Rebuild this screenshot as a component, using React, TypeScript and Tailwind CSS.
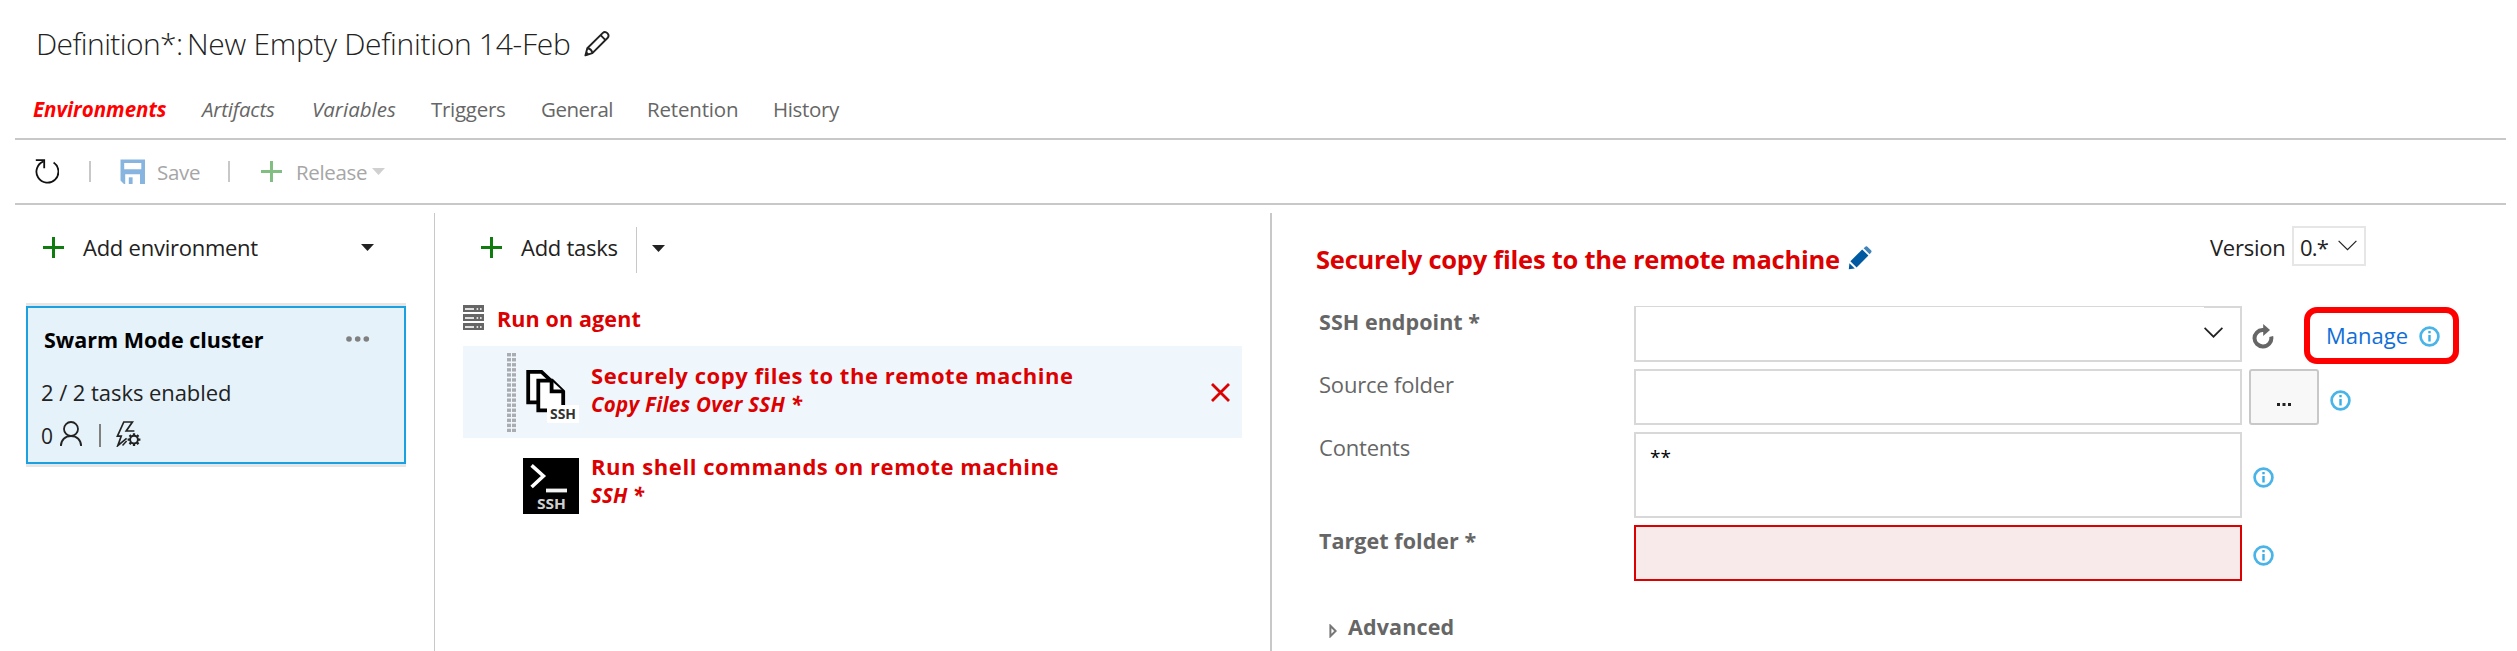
import type { ReactNode } from "react";

function Plus({ color }: { color: string }) {
  return (
    <svg width="21" height="21" viewBox="0 0 21 21" className="shrink-0">
      <path d="M0 10.5H21M10.5 0V21" stroke={color} strokeWidth="3" fill="none" />
    </svg>
  );
}

function Caret({ color }: { color: string }) {
  return (
    <svg width="13" height="7" viewBox="0 0 13 7" className="shrink-0">
      <path d="M0 0H13L6.5 7Z" fill={color} />
    </svg>
  );
}

function Chevron({ thin = false }: { thin?: boolean }) {
  return (
    <svg width="19" height="11" viewBox="0 0 19 11" className="shrink-0">
      <path d="M0.6 0.8L9.5 9.7L18.4 0.8" fill="none" stroke="#222" strokeWidth={thin ? 1.2 : 1.7} />
    </svg>
  );
}

function Info({ className = "" }: { className?: string }) {
  return (
    <svg width="21" height="21" viewBox="0 0 21 21" className={`shrink-0 ${className}`}>
      <circle cx="10.5" cy="10.5" r="8.9" fill="#fff" stroke="#4ab4e8" strokeWidth="2.7" />
      <rect x="9.3" y="5" width="2.4" height="2.3" fill="#3aade6" />
      <rect x="9.3" y="9" width="2.4" height="6.5" fill="#3aade6" />
    </svg>
  );
}

function OutlinePencil() {
  return (
    <svg width="26" height="26" viewBox="0 0 26 26" className="shrink-0">
      <g fill="none" stroke="#222" strokeWidth="1.9" strokeLinejoin="round">
        <path d="M1.4 24.4L3.3 17.2L18.6 2.1C20 0.8 22 0.9 23.3 2.2C24.7 3.6 24.8 5.6 23.5 7L8.4 22.2Z" />
        <path d="M16.6 4.2L21.5 9.1M3.3 17.2C5.8 17.5 8 19.6 8.4 22.2" />
      </g>
      <path d="M1.2 24.7L2.5 20.2L5.6 23.4Z" fill="#222" />
    </svg>
  );
}

function SolidPencil() {
  return (
    <svg width="24" height="24" viewBox="0 0 24 24" className="shrink-0">
      <g fill="#005aa1">
        <path d="M0.8 23.2L1.4 17.2L6.8 22.6Z" />
        <path d="M2.4 15.2L14.2 3.4L20.4 9.6L8.6 21.4Z" />
        <path d="M15.6 2.2L17.4 0.7C18.2 0.1 19 0.2 19.7 0.9L23 4.2C23.7 4.9 23.7 5.8 23.1 6.4L21.6 8.2Z" opacity="0.75" />
      </g>
    </svg>
  );
}

function RefreshThin() {
  return (
    <svg width="24" height="25" viewBox="0 0 24 25" className="shrink-0">
      <g fill="none" stroke="#111" strokeWidth="1.8">
        <path d="M18.6 3.6A11 11 0 1 1 8.6 2.4" />
        <path d="M0.8 1.1H9.2V9.3" />
      </g>
    </svg>
  );
}

function RefreshBold() {
  return (
    <svg width="22" height="25" viewBox="0 0 22 25" className="shrink-0">
      <path d="M12.5 6H10.5A8.3 8.3 0 0 0 2.5 14.3A8.3 8.3 0 0 0 10.8 22.4A8.3 8.3 0 0 0 19.2 12.5" fill="none" stroke="#666" strokeWidth="4" />
      <path d="M11.2 0L18 6L11.2 12Z" fill="#666" />
    </svg>
  );
}

function SaveIcon() {
  return (
    <svg width="25" height="25" viewBox="0 0 25 25" className="shrink-0">
      <path fillRule="evenodd" fill="#88b5df" d="M0.5 0.5H25V25H20V15.3H5.2V25H4L0.5 21.5ZM4.2 4V10.3H21.3V4Z" />
      <rect x="8.8" y="18.3" width="3.8" height="6.7" fill="#88b5df" />
    </svg>
  );
}

function Person() {
  return (
    <svg width="22" height="25" viewBox="0 0 22 25" className="shrink-0">
      <g fill="none" stroke="#222" strokeWidth="1.8">
        <circle cx="11" cy="8" r="7" />
        <path d="M0.9 25C0.9 19 5.2 15 11 15C16.8 15 21.1 19 21.1 25" />
      </g>
    </svg>
  );
}

function BoltGear() {
  return (
    <svg width="25" height="26" viewBox="0 0 25 26" className="shrink-0">
      <path d="M10.6 17.4L1.8 24.6L5.2 15.2H1.4L7.8 1H16.4L10.2 10H18.4" fill="none" stroke="#222" strokeWidth="1.7" />
      <path d="M6.5 24.4L10.6 20" fill="none" stroke="#222" strokeWidth="1.5" />
      <circle cx="18" cy="18.6" r="3.9" fill="none" stroke="#222" strokeWidth="1.9" />
      <g stroke="#222" strokeWidth="2.3">
        <path d="M18 12.2V14.6M18 22.6V25M11.6 18.6H14M22 18.6H24.4" />
        <path d="M13.5 14.1L15.2 15.8M20.8 21.4L22.5 23.1M13.5 23.1L15.2 21.4M20.8 15.8L22.5 14.1" />
      </g>
    </svg>
  );
}

function ServerIcon() {
  return (
    <svg width="21" height="25" viewBox="0 0 21 25" className="shrink-0">
      {[0, 9, 18].map((y) => (
        <g key={y}>
          <rect x="0" y={y} width="21" height="7" fill="#666" />
          <rect x="2" y={y + 3.2} width="9" height="1.6" fill="#fff" />
          <rect x="13.6" y={y + 3.2} width="1.6" height="1.6" fill="#fff" />
          <rect x="17" y={y + 3.2} width="1.6" height="1.6" fill="#fff" />
        </g>
      ))}
    </svg>
  );
}

function Grip() {
  return (
    <svg width="9" height="79" viewBox="0 0 9 79" className="shrink-0">
      {Array.from({ length: 16 }, (_, i) => (
        <g key={i} fill="#a9adb1">
          <rect x="0" y={i * 5.05} width="4" height="3.4" />
          <rect x="5" y={i * 5.05} width="4" height="3.4" />
        </g>
      ))}
    </svg>
  );
}

function CopySshIcon() {
  return (
    <svg width="56" height="56" viewBox="0 0 56 56" className="shrink-0">
      <g fill="#fff" stroke="#000" strokeWidth="3.8">
        <path d="M5.2 35.4V4.8H18.5L28 13.7V35.4Z" />
        <path d="M15.3 43.3V13.7H29L40.2 24.6V43.3Z" />
        <path d="M28.6 13.7V24.3H40.2" />
      </g>
      <rect x="24" y="38" width="32" height="18" fill="#fff" />
      <text x="27" y="52.2" fontSize="14.2" fontWeight="700" fill="#333" textLength="26" lengthAdjust="spacingAndGlyphs">SSH</text>
    </svg>
  );
}

function ShellSshIcon() {
  return (
    <svg width="56" height="56" viewBox="0 0 56 56" className="shrink-0">
      <rect width="56" height="56" fill="#000" />
      <path d="M8.6 7.4L20.4 18L8.6 29" fill="none" stroke="#fff" strokeWidth="3.6" />
      <rect x="23" y="30.6" width="21" height="3.8" fill="#f2f2f2" />
      <text x="14" y="50.6" fontSize="15" fontWeight="700" fill="#cfcfcf" textLength="29" lengthAdjust="spacingAndGlyphs">SSH</text>
    </svg>
  );
}

function Label({ bold = false, children }: { bold?: boolean; children: ReactNode }) {
  return (
    <div
      className={
        bold
          ? "mt-px w-[315px] shrink-0 self-start text-[21.5px] leading-[30px] font-bold tracking-[0.05px] text-[#666]"
          : "w-[315px] shrink-0 self-start leading-[30px] tracking-[-0.2px] text-[#666]"
      }
    >
      {children}
    </div>
  );
}

function Header() {
  return (
    <header className="flex h-[138px] flex-col pt-6">
      <div className="flex items-center pl-9">
        <h1 className="flex text-[30px] leading-[40px] font-light whitespace-pre">
          <span className="w-[151px] tracking-[-0.6px]">Definition*: </span>
          <span className="tracking-[-0.29px]">New Empty Definition 14-Feb</span>
        </h1>
        <span className="ml-[14px]">
          <OutlinePencil />
        </span>
      </div>
      <nav className="mt-[30px] flex text-[20.5px] leading-[30px] whitespace-nowrap text-[#666]">
        <span className="ml-[33px] w-[169px] font-bold text-[#f00] italic">Environments</span>
        <span className="w-[110px] tracking-[-0.19px] italic">Artifacts</span>
        <span className="w-[119px] italic">Variables</span>
        <span className="w-[110px] tracking-[-0.29px]">Triggers</span>
        <span className="w-[106px] tracking-[-0.5px]">General</span>
        <span className="w-[126px] tracking-[-0.17px]">Retention</span>
        <span className="tracking-[-0.35px]">History</span>
      </nav>
    </header>
  );
}

function Toolbar() {
  return (
    <div className="mr-[11px] ml-[15px] flex h-[67px] items-center border-y-2 border-[#c8c8c8] pl-5 text-[20.5px] leading-[30px] text-[#a6a6a6]">
      <RefreshThin />
      <div className="ml-[30px] h-[21px] w-[2px] bg-[#c8c8c8]" />
      <div className="ml-[29px] flex items-center">
        <SaveIcon />
        <span className="mt-px ml-[12px] w-[42px] tracking-[-0.29px]">Save</span>
      </div>
      <div className="ml-[29px] h-[21px] w-[2px] bg-[#c8c8c8]" />
      <div className="ml-[31px] flex items-center">
        <Plus color="#82bd82" />
        <span className="mt-px ml-[14px] w-[71px] tracking-[-0.34px]">Release</span>
        <span className="ml-[5px]">
          <Caret color="#d0d0d0" />
        </span>
      </div>
    </div>
  );
}

function Environments() {
  return (
    <section className="w-[434px] shrink-0 pt-[19px]">
      <div className="flex h-[30px] items-center pl-[43px] leading-[30px]">
        <Plus color="#107c10" />
        <span className="ml-[19px] w-[278px] tracking-[-0.25px]">Add environment</span>
        <Caret color="#222" />
      </div>
      <div className="mt-[41px] ml-[26px] h-[164px] w-[380px] border-y-[3px] border-[#e6e6e6]">
        <div className="h-full border-2 border-[#1ba1e2] bg-[#e5f2fa] pt-4 pl-[15px]">
          <div className="flex h-[30px] items-center leading-[30px]">
            <span className="mt-[2px] ml-px w-[302px] text-[21.5px] font-bold text-black">Swarm Mode cluster</span>
            <svg width="24" height="6" viewBox="0 0 24 6">
              <g fill="#808080">
                <circle cx="3" cy="3" r="2.8" />
                <circle cx="11.7" cy="3" r="2.8" />
                <circle cx="20.3" cy="3" r="2.8" />
              </g>
            </svg>
          </div>
          <div className="mt-[23px] -ml-[2px] leading-[30px] tracking-[-0.06px]">2 / 2 tasks enabled</div>
          <div className="mt-[14px] -ml-[2px] flex leading-[30px]">
            <span className="w-[19px] text-[21px]">0</span>
            <Person />
            <span className="mt-[3px] ml-[17px] h-[23px] w-[2px] bg-[#808080]" />
            <span className="ml-[15px]">
              <BoltGear />
            </span>
          </div>
        </div>
      </div>
    </section>
  );
}

function Tasks() {
  return (
    <section className="w-[836px] shrink-0 border-l border-[#c8c8c8] pt-[14px]">
      <div className="flex h-[46px] pl-[46px] leading-[30px]">
        <span className="mt-[10px]">
          <Plus color="#107c10" />
        </span>
        <span className="mt-[5px] ml-[19px] w-[115px] tracking-[-0.28px]">Add tasks</span>
        <span className="h-[46px] w-px bg-[#c8c8c8]" />
        <span className="mt-[18px] ml-[15px]">
          <Caret color="#222" />
        </span>
      </div>
      <div className="mt-[30px] flex h-[30px] items-start pl-7 leading-[30px] font-bold text-[#dc0000]">
        <span className="mt-[2px]">
          <ServerIcon />
        </span>
        <span className="mt-px ml-[13px] text-[21.5px] tracking-[0.13px]">Run on agent</span>
      </div>
      <div className="mt-[13px] ml-7 flex h-[92px] w-[779px] items-start bg-[#eff6fc] text-[#dc0000]">
        <div className="mt-[7px] ml-11">
          <Grip />
        </div>
        <div className="mt-[21px] ml-[7px]">
          <CopySshIcon />
        </div>
        <div className="mt-[14px] ml-3 w-[620px]">
          <div className="text-[22px] leading-[30px] font-bold tracking-[0.54px]">
            Securely copy files to the remote machine
          </div>
          <div className="text-[20.5px] leading-[28px] font-bold tracking-[0.26px] italic">Copy Files Over SSH *</div>
        </div>
        <svg width="19" height="19" viewBox="0 0 19 19" className="mt-[37px]">
          <path d="M1 1L18 18M18 1L1 18" stroke="#dc0000" strokeWidth="2.8" />
        </svg>
      </div>
      <div className="ml-7 flex items-start pt-[13px] text-[#dc0000]">
        <div className="mt-[7px] ml-[60px]">
          <ShellSshIcon />
        </div>
        <div className="ml-3">
          <div className="text-[22px] leading-[30px] font-bold tracking-[0.55px]">
            Run shell commands on remote machine
          </div>
          <div className="text-[20.5px] leading-[28px] font-bold tracking-[0.1px] italic">SSH *</div>
        </div>
      </div>
    </section>
  );
}

function TaskForm() {
  return (
    <section className="min-w-0 flex-1 border-l-2 border-[#c8c8c8]">
      <div className="flex h-[93px] items-start pl-[44px]">
        <div className="flex w-[894px] items-center pt-7 leading-[36px]">
          <h2 className="w-[525px] text-[25.5px] font-bold tracking-[-0.24px] whitespace-nowrap text-[#dc0000]">
            Securely copy files to the remote machine
          </h2>
          <span className="-mt-[2px] ml-[7px]">
            <SolidPencil />
          </span>
        </div>
        <div className="flex items-center pt-[13px] leading-[30px]">
          <span className="mt-px w-[82px] tracking-[-0.25px]">Version</span>
          <div className="flex h-10 w-[74px] items-center border-2 border-[#e6e6e6] pl-[6px]">
            <span className="mt-px w-[38px] tracking-[-0.8px]">0.*</span>
            <span className="-mt-px">
              <Chevron thin />
            </span>
          </div>
        </div>
      </div>
      <div className="flex flex-col gap-[7px] pl-[47px]">
        <div className="flex h-14 items-center">
          <Label bold>SSH endpoint *</Label>
          <div className="flex h-14 w-[608px] justify-end border-2 border-t border-[#d8d8d8]">
            <div className="w-[36px] border-t border-[#d8d8d8] pt-[19px]">
              <Chevron />
            </div>
          </div>
          <span className="mt-1 ml-[10px]">
            <RefreshBold />
          </span>
          <div className="mt-[2px] ml-[30px] flex h-[57px] w-[155px] shrink-0 items-center rounded-[13px] border-[6px] border-[#f00] pl-4">
            <span className="-mt-px w-[93px] leading-[30px] text-[#106ed8]">Manage</span>
            <Info className="mt-[3px]" />
          </div>
        </div>
        <div className="flex h-14 items-center">
          <Label>Source folder</Label>
          <div className="h-14 w-[608px] border-2 border-[#d8d8d8]" />
          <button className="ml-[7px] flex h-14 w-[70px] items-center justify-center rounded-[3px] border-2 border-[#c8c8c8] bg-[#f8f8f8]">
            <svg width="14" height="3" viewBox="0 0 14 3" className="mt-[14px]">
              <path d="M0 0H3V3H0ZM5.5 0H8.5V3H5.5ZM11 0H14V3H11Z" fill="#222" />
            </svg>
          </button>
          <Info className="mt-[6px] ml-[11px]" />
        </div>
        <div className="flex h-[86px] items-center">
          <Label>Contents</Label>
          <div className="h-full w-[608px] border-2 border-[#d8d8d8] pt-[8px] pl-[14px] text-[19px] leading-[30px] text-black">
            **
          </div>
          <Info className="mt-[5px] ml-[11px]" />
        </div>
        <div className="flex h-14 items-center">
          <Label bold>Target folder *</Label>
          <div className="h-14 w-[608px] border-2 border-[#dc0000] bg-[#f8eaea]" />
          <Info className="mt-[5px] ml-[11px]" />
        </div>
      </div>
      <div className="mt-[30px] flex items-start pl-[57px] leading-[30px] font-bold text-[#666]">
        <svg width="8" height="14" viewBox="0 0 8 14" className="mt-[13px]">
          <path d="M1.4 1.8L6.6 7L1.4 12.2Z" fill="#fff" stroke="#777" strokeWidth="2" />
        </svg>
        <span className="mt-px ml-[11px] text-[21.5px] tracking-[0.15px]">Advanced</span>
      </div>
    </section>
  );
}

export default function App() {
  return (
    <div className="h-[651px] w-[2517px] overflow-hidden bg-white font-['Open_Sans','Noto_Sans',sans-serif] text-[22px] text-[#222]">
      <Header />
      <Toolbar />
      <main className="flex h-[446px] pt-2">
        <Environments />
        <Tasks />
        <TaskForm />
      </main>
    </div>
  );
}
